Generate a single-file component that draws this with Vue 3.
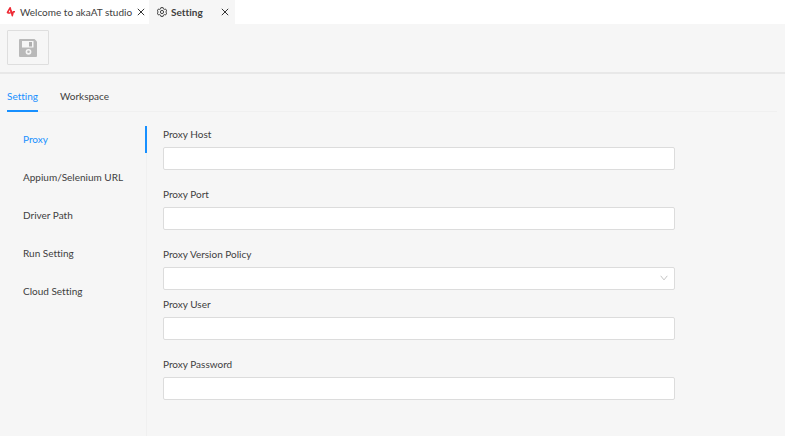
<script setup>
import { ref } from 'vue'

const files = ref([
  { id: 'welcome', title: 'Welcome to akaAT studio', icon: 'logo' },
  { id: 'setting', title: 'Setting', icon: 'gear' },
])
const activeFile = ref('setting')

const sections = ['Setting', 'Workspace']
const activeSection = ref('Setting')

const menu = ['Proxy', 'Appium/Selenium URL', 'Driver Path', 'Run Setting', 'Cloud Setting']
const activeMenu = ref('Proxy')

const fields = [
  { id: 'proxy-host', label: 'Proxy Host', type: 'text' },
  { id: 'proxy-port', label: 'Proxy Port', type: 'text' },
  { id: 'proxy-policy', label: 'Proxy Version Policy', type: 'select' },
  { id: 'proxy-user', label: 'Proxy User', type: 'text' },
  { id: 'proxy-password', label: 'Proxy Password', type: 'password' },
]
const values = ref({})

function closeFile(id) {
  files.value = files.value.filter((f) => f.id !== id)
}
</script>

<template>
  <div class="app">
    <header class="file-tabs">
      <div
        v-for="file in files"
        :key="file.id"
        class="file-tab"
        :class="[file.id, { active: file.id === activeFile }]"
      >
        <button class="file-open" type="button" @click="activeFile = file.id">
          <svg v-if="file.icon === 'logo'" class="file-icon" viewBox="0 0 10 10" aria-hidden="true">
            <path d="M1.2 6 4.1.8 5.4 5.6M1.2 6H4.6" fill="none" stroke="#ee2a35" stroke-width="1.6" stroke-linejoin="round" />
            <path d="M5 3.4 6.3 8.6 7.2 4.8H9" fill="none" stroke="#ee2a35" stroke-width="1.6" stroke-linejoin="round" />
          </svg>
          <svg v-else class="file-icon" viewBox="0 0 20 20" fill="none" stroke="#333" stroke-width="1.8" stroke-linejoin="round" aria-hidden="true">
            <path d="M7.8 1.2h4.4l.7 2.7 1.6.9 2.7-.8 2.2 3.8-2 2.2 2 2.2-2.2 3.8-2.7-.8-1.6.9-.7 2.7H7.8l-.7-2.7-1.6-.9-2.7.8-2.2-3.8 2-2.2-2-2.2 2.2-3.8 2.7.8 1.6-.9z" />
            <circle cx="10" cy="10" r="3.2" />
          </svg>
          <span>{{ file.title }}</span>
        </button>
        <button class="file-close" type="button" :aria-label="'Close ' + file.title" @click="closeFile(file.id)">
          <svg viewBox="0 0 8 8" aria-hidden="true">
            <path d="M.8.8 7.2 7.2M7.2.8.8 7.2" stroke="#333" stroke-width="1" />
          </svg>
        </button>
      </div>
    </header>

    <div class="toolbar">
      <button class="save" type="button" aria-label="Save" disabled>
        <svg viewBox="0 0 18 18" aria-hidden="true">
          <path d="M1 0h14.5L18 2.5V17q0 1-1 1H1q-1 0-1-1V1q0-1 1-1z" fill="#b9b9b9" />
          <path d="M3 2h11.5v6.5H3z" fill="#f6f6f6" />
          <path d="M10 3h3v4.5h-3z" fill="#b0b0b0" />
          <circle cx="9.5" cy="12.8" r="2.1" fill="none" stroke="#f6f6f6" stroke-width="1.6" />
        </svg>
      </button>
    </div>

    <main class="page">
      <nav class="sections">
        <button
          v-for="s in sections"
          :key="s"
          class="section"
          :class="{ active: s === activeSection }"
          type="button"
          @click="activeSection = s"
        >{{ s }}</button>
      </nav>

      <div class="body">
        <nav class="menu">
          <button
            v-for="m in menu"
            :key="m"
            class="menu-item"
            :class="{ active: m === activeMenu }"
            type="button"
            @click="activeMenu = m"
          >{{ m }}</button>
        </nav>

        <form class="form" @submit.prevent>
          <div v-for="f in fields" :key="f.id" class="field" :class="f.type">
            <label :for="f.id">{{ f.label }}</label>
            <div v-if="f.type === 'select'" class="select-box">
              <select :id="f.id" v-model="values[f.id]" class="control"></select>
              <svg class="chevron" viewBox="0 0 8 6" aria-hidden="true">
                <path d="M.7.8 4 4.9 7.3.8" fill="none" stroke="#c4c4c4" stroke-width="1" />
              </svg>
            </div>
            <input v-else :id="f.id" v-model="values[f.id]" class="control" :type="f.type" autocomplete="off" />
          </div>
        </form>
      </div>
    </main>
  </div>
</template>

<style>
body {
  background: #f6f6f6;
}
</style>

<style scoped>
.app {
  display: flex;
  flex-direction: column;
  min-height: 100vh;
  background: #f6f6f6;
  color: #404040;
  font-family: Lato, "Noto Sans", sans-serif;
  font-size: 10px;
  font-variant-ligatures: none;
  line-height: 16px;
}

button {
  margin: 0;
  padding: 0;
  border: 0;
  background: none;
  color: inherit;
  font: inherit;
  font-variant-ligatures: none;
  cursor: pointer;
}

.file-tabs {
  display: flex;
  height: 24px;
  background: #fff;
}

.file-tab {
  display: flex;
  align-items: center;
  justify-content: space-between;
  box-sizing: border-box;
  padding: 0 4px 0 6px;
  width: 149px;
}

.file-tab.setting {
  width: 86px;
  padding: 0 6px 0 8px;
}

.file-tab.active {
  background: #f6f6f6;
  font-weight: 700;
}

.file-open {
  display: flex;
  align-items: center;
  gap: 4px;
  white-space: nowrap;
}

.file-icon {
  width: 10px;
  height: 10px;
}

.file-close {
  display: flex;
}

.file-close svg {
  width: 8px;
  height: 8px;
}

.toolbar {
  padding: 6px 7px 7px;
  border-bottom: 2px solid #e8e8e8;
}

.save {
  display: flex;
  align-items: center;
  justify-content: center;
  box-sizing: border-box;
  width: 42px;
  height: 35px;
  border: 1px solid #dedede;
  border-radius: 1px;
}

.save svg {
  width: 18px;
  height: 18px;
}

.page {
  display: flex;
  flex: 1;
  flex-direction: column;
  padding: 14px 8px 0 7px;
}

.sections {
  display: flex;
  gap: 22px;
  height: 23px;
  border-bottom: 1px solid #f0f0f0;
}

.section {
  box-sizing: border-box;
  height: 24px;
  padding-bottom: 8px;
}

.section.active {
  border-bottom: 2px solid #1890ff;
  padding-bottom: 6px;
  color: #1890ff;
}

.body {
  display: flex;
  flex: 1;
  margin-top: 14px;
}

.menu {
  flex: none;
  width: 139px;
  border-right: 1px solid #f0f0f0;
}

.menu-item {
  display: block;
  box-sizing: border-box;
  width: 140px;
  height: 27px;
  margin-bottom: 11px;
  padding: 0 0 2px 16px;
  border-right: 2px solid transparent;
  text-align: left;
}

.menu-item.active {
  border-right-color: #1890ff;
  color: #1890ff;
}

.form {
  display: grid;
  flex: 1;
  grid-template-columns: 5fr 1fr;
  align-content: start;
  padding-left: 16px;
}

.field {
  display: flex;
  flex-direction: column;
  grid-column: 1;
  gap: 5px;
  margin-bottom: 16px;
}

.field.select {
  margin-bottom: 6px;
}

.control {
  display: block;
  box-sizing: border-box;
  width: 100%;
  height: 23px;
  margin: 0;
  padding: 0 8px;
  border: 1px solid #dcdcdc;
  border-radius: 2px;
  background: #fff;
  color: inherit;
  font: inherit;
  appearance: none;
}

.select-box {
  position: relative;
}

.chevron {
  position: absolute;
  top: 8px;
  right: 7px;
  width: 8px;
  height: 6px;
  pointer-events: none;
}
</style>
